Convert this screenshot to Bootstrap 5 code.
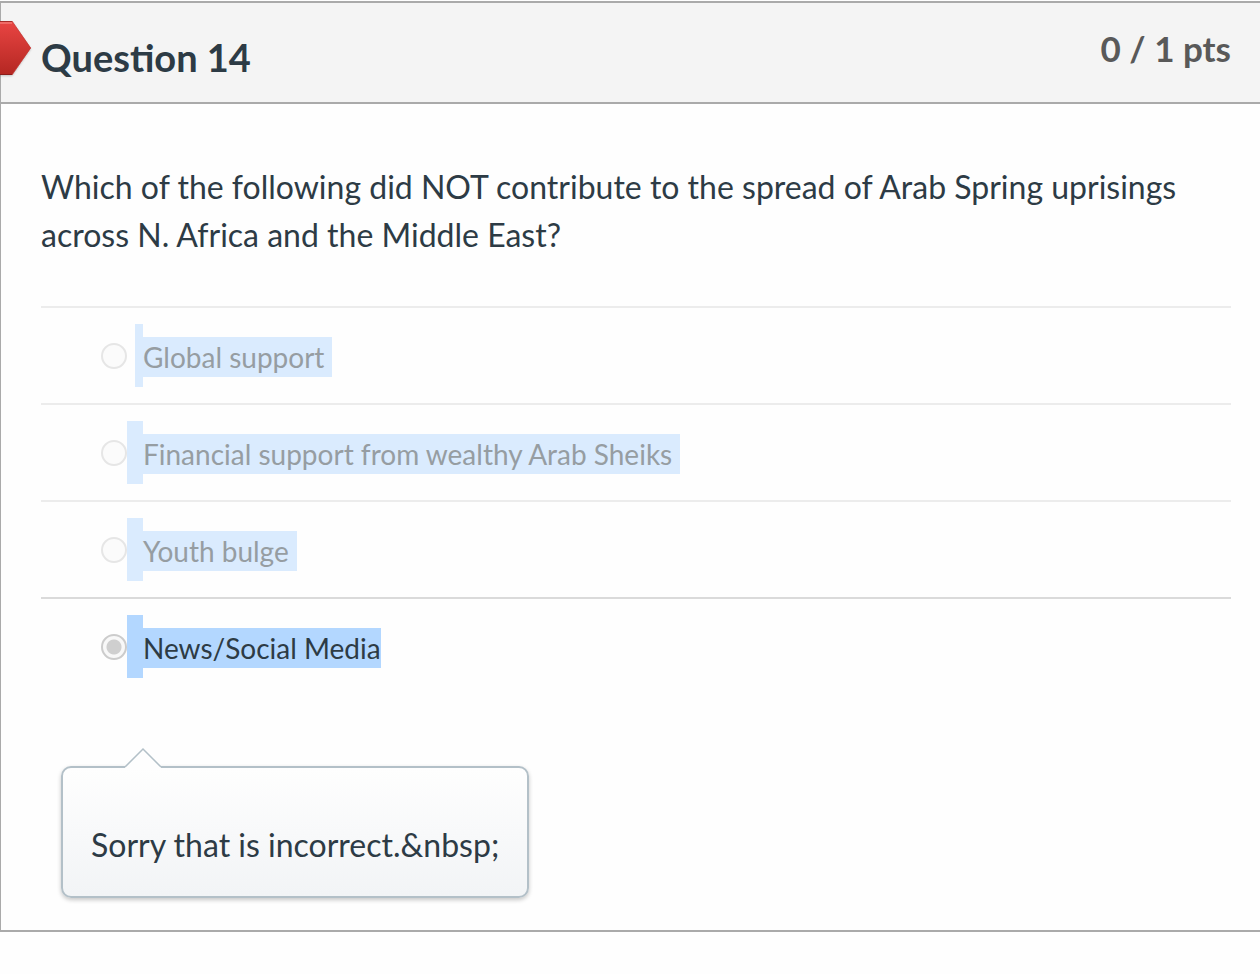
<!DOCTYPE html>
<html lang="en">
<head>
<meta charset="utf-8">
<meta name="viewport" content="width=device-width, initial-scale=1">
<title>Question 14</title>
<link href="https://cdn.jsdelivr.net/npm/bootstrap@5.3.0/dist/css/bootstrap.min.css" rel="stylesheet">
<style>
  body { font-family: Lato, "Liberation Sans", sans-serif; color: #2d3b45; background: #fefefe; }
  .question { margin-top: 1px; border: 2px solid #aaa; border-left-width: 1px; border-right: 0; }
  .question-head { background: #f4f4f4; border-bottom: 2px solid #aaa; min-height: 101px; padding: 20px 29px 16px 40px; }
  .question-title { font-size: 38px; line-height: 48px; font-weight: 700; padding-top: 10px; }
  .points { font-size: 35px; line-height: 50px; font-weight: 700; color: #595959; }
  .flag { left: -1px; top: 16px; }
  .question-body { padding: 59px 29px 32px 40px; }
  .prompt { font-size: 32px; line-height: 48px; margin-bottom: 47px; }
  .answer { border-top: 2px solid #ececec; height: 97px; padding: 16px 0 16px 60px; }
  .answer.chosen { border-top-color: #dadada; }
  .answer-radio { appearance: none; width: 26px; height: 26px; margin: 19px 0 0; border: 2px solid #e6e6e6; border-radius: 50%; background: #fbfbfb; }
  .chosen .answer-radio { border-color: #ccc; background: radial-gradient(circle, #cfcfcf 7px, #f8f8f8 8px); }
  .answer-text { font-size: 28px; line-height: 40px; color: #969da2; }
  .answer-text::before { content: ""; width: 16px; height: 63px; background: #daebfe; }
  .answer:first-child .answer-text::before { width: 8px; margin-left: 8px; }
  .answer-text span { background: #daebfe; margin-top: 13px; padding-right: 8px; }
  .chosen .answer-text { color: #2d3b45; }
  .chosen .answer-text::before, .chosen .answer-text span { background: #b3d7ff; }
  .chosen .answer-text span { padding-right: 0; }
  .comment { margin: 72px 0 0 20px; padding: 53px 28px 27px; border: 2px solid #b3c0c8; border-radius: 10px; background: linear-gradient(#fefefe, #f2f4f6); box-shadow: 0 2px 4px rgba(0,0,0,.22); font-size: 32px; line-height: 48px; }
  .comment-tip { left: 60px; top: -21px; }
</style>
</head>
<body>
<main class="question">
  <header class="question-head position-relative d-flex justify-content-between align-items-start">
    <svg class="flag position-absolute" width="34" height="60" viewBox="0 0 34 60" aria-hidden="true">
      <defs>
        <linearGradient id="red" x1="0" y1="0" x2="0" y2="1"><stop offset="0" stop-color="#e94543"/><stop offset="1" stop-color="#b42722"/></linearGradient>
        <filter id="soft" x="-20%" y="-20%" width="140%" height="140%"><feGaussianBlur stdDeviation="1"/></filter>
      </defs>
      <path d="M0 3H12L31 30 12 57H0Z" fill="#000" opacity=".2" filter="url(#soft)"/>
      <path d="M0 2H12L31 29 12 56H0Z" fill="url(#red)"/>
      <path d="M0 2.5H12" stroke="#a82b28"/>
      <path d="M0 4H12" stroke="#f06a66" stroke-width="2"/>
      <path d="M0 55.5H12" stroke="#8c1d1a"/>
      <path d="M12 2L30.500 29 12 56" fill="none" stroke="#c43a36" stroke-opacity=".7"/>
    </svg>
    <h1 class="question-title m-0">Question 14</h1>
    <div class="points">0 / 1 pts</div>
  </header>
  <div class="question-body">
    <p class="prompt" id="prompt">Which of the following did NOT contribute to the spread of Arab Spring uprisings across N. Africa and the Middle East?</p>
    <div role="radiogroup" aria-labelledby="prompt">
      <div class="answer d-flex align-items-start">
        <input class="answer-radio flex-shrink-0" type="radio" name="answer" id="a1" disabled>
        <label class="answer-text d-flex align-items-start" for="a1"><span>Global support</span></label>
      </div>
      <div class="answer d-flex align-items-start">
        <input class="answer-radio flex-shrink-0" type="radio" name="answer" id="a2" disabled>
        <label class="answer-text d-flex align-items-start" for="a2"><span>Financial support from wealthy Arab Sheiks</span></label>
      </div>
      <div class="answer d-flex align-items-start">
        <input class="answer-radio flex-shrink-0" type="radio" name="answer" id="a3" disabled>
        <label class="answer-text d-flex align-items-start" for="a3"><span>Youth bulge</span></label>
      </div>
      <div class="answer chosen d-flex align-items-start">
        <input class="answer-radio flex-shrink-0" type="radio" name="answer" id="a4" checked disabled>
        <label class="answer-text d-flex align-items-start" for="a4"><span>News/Social Media</span></label>
      </div>
    </div>
    <div class="d-flex">
      <div class="comment position-relative">
        <svg class="comment-tip position-absolute" width="40" height="22" viewBox="0 0 40 22" aria-hidden="true">
          <path d="M2 19L20 1.500 38 19V22H2Z" fill="#fefefe"/>
          <path d="M2 20L20 2 38 20" fill="none" stroke="#b3c0c8" stroke-width="1.500"/>
        </svg>
        Sorry that is incorrect.&amp;nbsp;
      </div>
    </div>
  </div>
</main>
<script src="https://cdn.jsdelivr.net/npm/bootstrap@5.3.0/dist/js/bootstrap.bundle.min.js"></script>
</body>
</html>
